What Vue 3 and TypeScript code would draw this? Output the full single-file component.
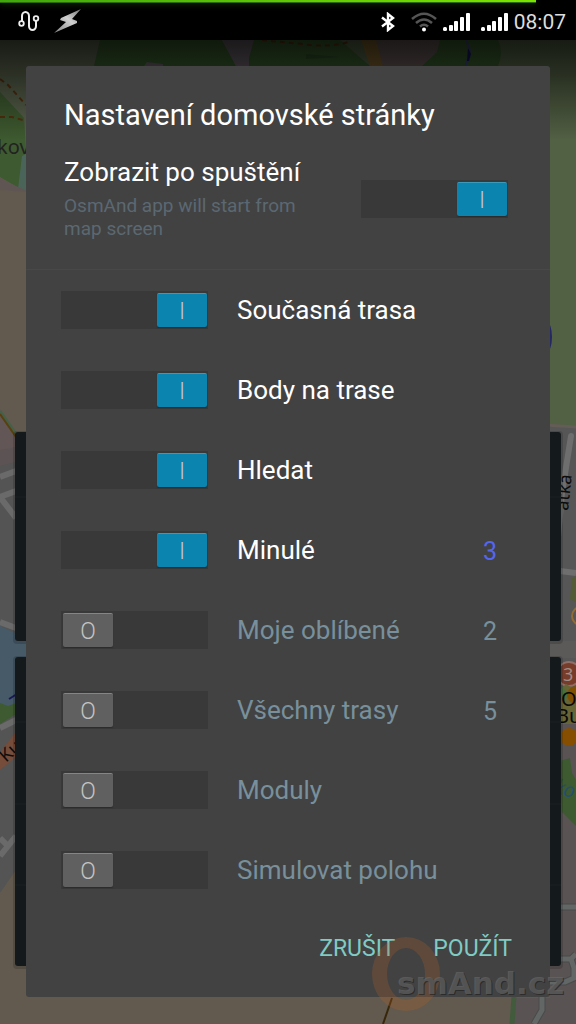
<script setup lang="ts">
import { ref } from 'vue'

interface Card {
  id: string
  label: string
  enabled: boolean
  count?: number
}

const showOnStart = ref(true)

const cards = ref<Card[]>([
  { id: 'current-track', label: 'Současná trasa', enabled: true },
  { id: 'waypoints', label: 'Body na trase', enabled: true },
  { id: 'search', label: 'Hledat', enabled: true },
  { id: 'recent', label: 'Minulé', enabled: true, count: 3 },
  { id: 'favourites', label: 'Moje oblíbené', enabled: false, count: 2 },
  { id: 'tracks', label: 'Všechny trasy', enabled: false, count: 5 },
  { id: 'plugins', label: 'Moduly', enabled: false },
  { id: 'simulate', label: 'Simulovat polohu', enabled: false },
])
</script>

<template>
  <div class="screen">
    <svg class="map" viewBox="0 0 576 1024" preserveAspectRatio="xMidYMid slice" aria-hidden="true">
      <defs>
        <linearGradient id="topShade" x1="0" y1="0" x2="0" y2="1">
          <stop offset="0" stop-color="#000" stop-opacity="0.72" />
          <stop offset="0.35" stop-color="#000" stop-opacity="0.5" />
          <stop offset="1" stop-color="#000" stop-opacity="0" />
        </linearGradient>
      </defs>
      <rect width="576" height="1024" fill="#625a4e" />
      <path d="M0 40H576V426L540 424V140H0Z" fill="#526044" />
      <!-- parks in the north -->
      <path d="M0 40H100L94 66L60 140H26L24 118L0 92Z" fill="#58614b" />
      <path d="M0 92L24 118L26 150L22 190L0 177Z" fill="#3e5a30" />
      <path d="M100 40H222L236 66H94Z" fill="#36582c" />
      <path d="M222 40H254L249 66H236Z" fill="#635a62" />
      <path d="M144 66L147 62L163 64V66Z" fill="#635a62" />
      <path d="M254 40H340L370 66H249V58Z" fill="#36582c" />
      <path d="M306 54L340 57L306 59Z" fill="#2c4b27" />
      <path d="M376 40H440L437 52L422 66H382Z" fill="#625553" />
      <path d="M361 40H376L383 66H370Z" fill="#755a2b" />
      <path d="M440 40H498Q504 52 498 66H422L437 52Z" fill="#36582c" />
      <path d="M466 40L470 50L466 66" fill="none" stroke="#3c4177" stroke-width="2" />
      <path d="M468 48L471 54L469 61H467Z" fill="#15155e" />
      <path d="M0 79L8 85L26 105M0 117H12L26 121M262 40L302 44Q330 48 348 42" fill="none" stroke="#57300e" stroke-width="2" stroke-dasharray="5 4" />
      <path d="M22 156L26 154V192L18 189Z" fill="#4b6459" />
      <path d="M0 178L18 187L26 190V195L0 190Z" fill="#5f5654" />
      <text x="-3" y="154" class="place">kov</text>
      <path d="M0 190L26 192V440L15 434L0 415Z" fill="#625a4e" />
      <!-- west side streets -->
      <path d="M0 409L15 434V460L0 470Z" fill="#625756" />
      <path d="M0 411L16 434" stroke="#456048" stroke-width="3" />
      <path d="M0 414L16 437" stroke="#59400e" stroke-width="2" />
      <path d="M0 450L16 447V464L0 467Z" fill="#5c5454" />
      <path d="M0 466L16 462V640L0 625Z" fill="#545454" />
      <path d="M0 477L16 471M0 497L16 491M0 497L16 518M0 622L16 628" stroke="#6a6a6a" stroke-width="6" fill="none" />
      <path d="M0 626L30 640V702L0 708Z" fill="#465a68" />
      <path d="M9 699L17 694" stroke="#191958" stroke-width="2" />
      <path d="M0 703L8 706L16 703V720L0 728Z" fill="#3e5a30" />
      <path d="M0 724L16 714V870L0 893Z" fill="#545454" />
      <path d="M0 728L16 720M0 856L16 836M0 838L8 846" stroke="#6a6a6a" stroke-width="6" fill="none" />
      <path d="M0 752L16 732V757L0 770Z" fill="#764c3b" />
      <text transform="translate(6 763) rotate(-42)" class="street">Kur</text>
      <!-- east side streets -->
      <path d="M545 426H576V720H545Z" fill="#565656" />
      <path d="M545 425L576 427" stroke="#635c57" stroke-width="3" />
      <path d="M571 436L562 493L556 560" fill="none" stroke="#6e6e6e" stroke-width="6" stroke-linecap="round" />
      <text transform="translate(568 511) rotate(-84)" class="street">atka</text>
      <path d="M560 571L576 573" stroke="#6e6e6e" stroke-width="6" />
      <path d="M572 578L576 576V602L570 599Z" fill="#535b36" />
      <circle cx="581" cy="616" r="9" fill="none" stroke="#916c35" stroke-width="2" />
      <rect x="545" y="641" width="31" height="17" fill="#5c5a58" />
      <circle cx="569" cy="674" r="12" fill="#783c2b" stroke="#916f66" stroke-width="2" />
      <text x="563" y="681" class="badge">3</text>
      <path d="M560 690L566 684L576 690V730H560Z" fill="#676536" />
      <path d="M562 686L569 695L562 700Z" fill="#48703a" />
      <circle cx="576" cy="695" r="9" fill="#805000" />
      <path d="M560 724H576V750H560Z" fill="#5a5354" />
      <circle cx="569" cy="737" r="9" fill="#864e00" />
      <text x="561" y="706" class="place place-dark">O</text>
      <text x="556" y="723" class="place place-dark">Bu</text>
      <path d="M560 748H576V1024H550V820H560Z" fill="#5a5354" />
      <path d="M560 761L570 758L572 773L576 780V826L562 812Z" fill="#3e5a30" />
      <text transform="translate(553 792) rotate(18)" class="water">ko</text>
      <path d="M516 998H576V1024H512Z" fill="#5a5354" />
      <path d="M514 997L512 1024" stroke="#415b3c" stroke-width="5" />
      <path d="M560 907H576M561 959H571L576 954M571 959L574 968V978L565 982H548M542 997V1010L534 1024" fill="none" stroke="#484b4a" stroke-width="7" />
      <path d="M560 907H576M561 959H571L576 954M571 959L574 968V978L565 982H548M542 997V1010L534 1024" fill="none" stroke="#626665" stroke-width="5" />
      <path d="M392 998L383 1024" stroke="#38270b" stroke-width="2" />
      <ellipse cx="547" cy="337" rx="5" ry="15" fill="#242963" />
      <!-- dashboard cards behind the dialog -->
      <rect x="13" y="431" width="550" height="213" rx="4" fill="#000" fill-opacity="0.15" />
      <rect x="15" y="432" width="546" height="209" rx="3" fill="#14191b" />
      <rect x="13" y="656" width="550" height="313" rx="4" fill="#000" fill-opacity="0.15" />
      <rect x="15" y="657" width="546" height="309" rx="3" fill="#14191b" />
      <path d="M15 497H561M15 722H561M15 804H561M15 885H561" stroke="#1b2123" />
      <rect y="40" width="576" height="100" fill="url(#topShade)" />
    </svg>

    <header class="status">
      <div class="progress"></div>
      <svg class="icon route" width="22" height="22" viewBox="0 0 22 22" aria-hidden="true">
        <path d="M4 12V6a3.500 4 0 0 1 7 0V16a3.500 4 0 0 0 7 0V9" fill="none" stroke="#eee" stroke-width="2" />
        <circle cx="3.500" cy="13.500" r="2.300" fill="#000" stroke="#eee" stroke-width="1.800" />
        <circle cx="18" cy="8.500" r="2.300" fill="#000" stroke="#eee" stroke-width="1.800" />
      </svg>
      <svg class="icon bolt" width="28" height="26" viewBox="0 0 28 26" aria-hidden="true">
        <defs>
          <linearGradient id="boltFill" x1="1" y1="0" x2="0" y2="1">
            <stop offset="0" stop-color="#777" />
            <stop offset="0.45" stop-color="#d0d0d0" />
            <stop offset="1" stop-color="#808080" />
          </linearGradient>
        </defs>
        <path d="M27 1L7 10L6 12L12 14L0 25L23 15L23 13L18 11Z" fill="url(#boltFill)" />
      </svg>
      <span class="spacer"></span>
      <svg class="icon" width="14" height="20" viewBox="0 0 14 20" aria-hidden="true">
        <path d="M1 5.500L12 14L7 18V2L12 6L1 14.500" fill="none" stroke="#fff" stroke-width="2.400" />
      </svg>
      <svg class="icon wifi" width="26" height="20" viewBox="0 0 26 20" fill="none" stroke="#555" stroke-width="2.500" aria-hidden="true">
        <path d="M1 7Q13-3.500 25 7M5 11Q13 4 21 11M9 14.500Q13 11 17 14.500" />
        <circle cx="13" cy="17.500" r="2" fill="#fff" stroke="none" />
      </svg>
      <svg v-for="n in 2" :key="n" class="icon signal" width="27" height="18" viewBox="0 0 27 18" fill="#fff" aria-hidden="true">
        <rect x="0" y="14" width="4" height="4" rx="1.500" />
        <rect x="6" y="12" width="4" height="6" rx="1" />
        <rect x="11" y="8" width="4" height="10" rx="1" />
        <rect x="17" y="4" width="4" height="14" rx="1" />
        <rect x="23" y="0" width="4" height="18" rx="1" />
      </svg>
      <time class="clock">08:07</time>
    </header>

    <main class="dialog" role="dialog" aria-labelledby="dialog-title">
      <h1 id="dialog-title" class="title">Nastavení domovské stránky</h1>

      <section class="startup">
        <label class="startup-text" for="show-on-start">
          <span class="startup-name">Zobrazit po spuštění</span>
          <span class="startup-hint">OsmAnd app will start from map screen</span>
        </label>
        <span class="switch">
          <input id="show-on-start" v-model="showOnStart" type="checkbox" role="switch" />
          <span class="thumb" aria-hidden="true">{{ showOnStart ? 'I' : 'O' }}</span>
        </span>
      </section>

      <ul class="cards">
        <li v-for="card in cards" :key="card.id" class="row" :class="{ off: !card.enabled }">
          <span class="switch">
            <input :id="card.id" v-model="card.enabled" type="checkbox" role="switch" />
            <span class="thumb" aria-hidden="true">{{ card.enabled ? 'I' : 'O' }}</span>
          </span>
          <label class="name" :for="card.id">{{ card.label }}</label>
          <span v-if="card.count !== undefined" class="count">{{ card.count }}</span>
        </li>
      </ul>

      <footer class="actions">
        <button type="button">ZRUŠIT</button>
        <button type="button">POUŽÍT</button>
      </footer>
    </main>

    <svg class="watermark" width="196" height="80" viewBox="0 0 196 80" aria-hidden="true">
      <path fill-rule="evenodd" d="M36 3a34 37 0 0 1 0 74a34 37 0 0 1 0-74ZM36 14a19 26 0 0 0 0 52a19 26 0 0 0 0-52Z" fill="#b45f28" fill-opacity="0.26" />
      <text x="28" y="61" class="mark mark-shadow">smAnd.cz</text>
      <text x="27" y="60" class="mark">smAnd.cz</text>
    </svg>
  </div>
</template>

<style>
body {
  margin: 0;
  background: #625a4e;
}
</style>

<style scoped>
.screen {
  position: relative;
  box-sizing: border-box;
  min-height: 100vh;
  overflow: hidden;
  font-family: Roboto, "Noto Sans", sans-serif;
  color: #fff;
}

.map {
  position: absolute;
  inset: 0;
  width: 100%;
  height: 100%;
}

.place {
  font: 20px "Noto Sans", sans-serif;
  fill: #222;
}

.place-dark {
  fill: #080808;
}

.street {
  font: 18px "Noto Sans", sans-serif;
  fill: #0c0c0c;
}

.badge {
  font: 18px "Noto Sans", sans-serif;
  fill: #a08d88;
}

.water {
  font: italic 20px "Noto Sans", sans-serif;
  fill: #24506d;
}

.status {
  position: relative;
  display: flex;
  align-items: center;
  box-sizing: border-box;
  height: 40px;
  padding: 3px 10px 0 18px;
  background: #000;
}

.progress {
  position: absolute;
  top: 0;
  left: 0;
  width: 93%;
  height: 2px;
  background: linear-gradient(90deg, #3fa80c, #7be600);
  box-shadow: 0 1px 0 #2c6a05, 0 2px 6px #1d4a04;
}

.icon {
  flex: none;
}

.route {
  margin-bottom: 2px;
}

.bolt {
  margin: 0 0 2px 14px;
}

.wifi {
  margin-left: 16px;
}

.wifi,
.signal {
  margin-right: 6px;
}

.signal + .signal {
  margin-left: 5px;
}

.spacer {
  flex: 1;
}

.clock {
  font-size: 21px;
  line-height: 26px;
  color: #ddd;
}

.dialog {
  position: relative;
  margin: 26px 26px 27px;
  border-radius: 3px;
  background: #424242;
}

.title {
  margin: 0;
  padding: 32px 38px 25px;
  font-size: 29px;
  line-height: 34px;
  font-weight: 400;
}

.startup {
  display: flex;
  align-items: center;
  justify-content: space-between;
  padding: 0 42px 29px 38px;
  border-bottom: 1px solid #424a50;
}

.startup-text {
  width: 260px;
}

.startup-name {
  display: block;
  margin-bottom: 7px;
  font-size: 26px;
  line-height: 30px;
}

.startup-hint {
  display: block;
  font-size: 19px;
  line-height: 23px;
  color: #5b6872;
}

.switch {
  position: relative;
  flex: none;
  display: flex;
  box-sizing: border-box;
  width: 147px;
  height: 38px;
  padding: 2px 1px 2px 2px;
  background: #393939;
}

.switch input {
  position: absolute;
  inset: 0;
  width: 100%;
  height: 100%;
  margin: 0;
  opacity: 0;
  cursor: pointer;
}

.thumb {
  box-sizing: border-box;
  width: 50px;
  height: 34px;
  border-top: 1px solid #858585;
  border-radius: 2px;
  background: #606060;
  box-shadow: 0 1px 1px #2c2c2c;
  color: #c4c4c4;
  font-size: 23px;
  line-height: 36px;
  font-weight: 300;
  text-align: center;
  pointer-events: none;
}

.switch input:checked + .thumb {
  margin-left: auto;
  border-top-color: #3a9abb;
  background: #0b85b0;
}

.cards {
  margin: 0;
  padding: 0;
  list-style: none;
}

.row {
  display: flex;
  align-items: center;
  height: 80px;
  padding: 0 53px 0 35px;
}

.name {
  flex: 1;
  margin-left: 29px;
  font-size: 26px;
  line-height: 30px;
}

.count {
  padding-top: 3px;
  font-size: 25px;
  line-height: 30px;
  color: #5566ee;
}

.off .name,
.off .count {
  color: #78909c;
}

.actions {
  display: flex;
  justify-content: flex-end;
  gap: 38px;
  padding: 23px 38px 32px 0;
}

.actions button {
  margin: 0;
  padding: 0;
  border: 0;
  background: none;
  color: #80cbc4;
  font: 23px/32px Roboto, "Noto Sans", sans-serif;
  cursor: pointer;
}

.watermark {
  position: absolute;
  right: 10px;
  bottom: 10px;
  pointer-events: none;
}

.mark {
  font: bold 31px "DejaVu Sans", sans-serif;
  fill: #666;
  fill-opacity: 0.7;
}

.mark-shadow {
  fill: #222;
  fill-opacity: 0.7;
}
</style>
